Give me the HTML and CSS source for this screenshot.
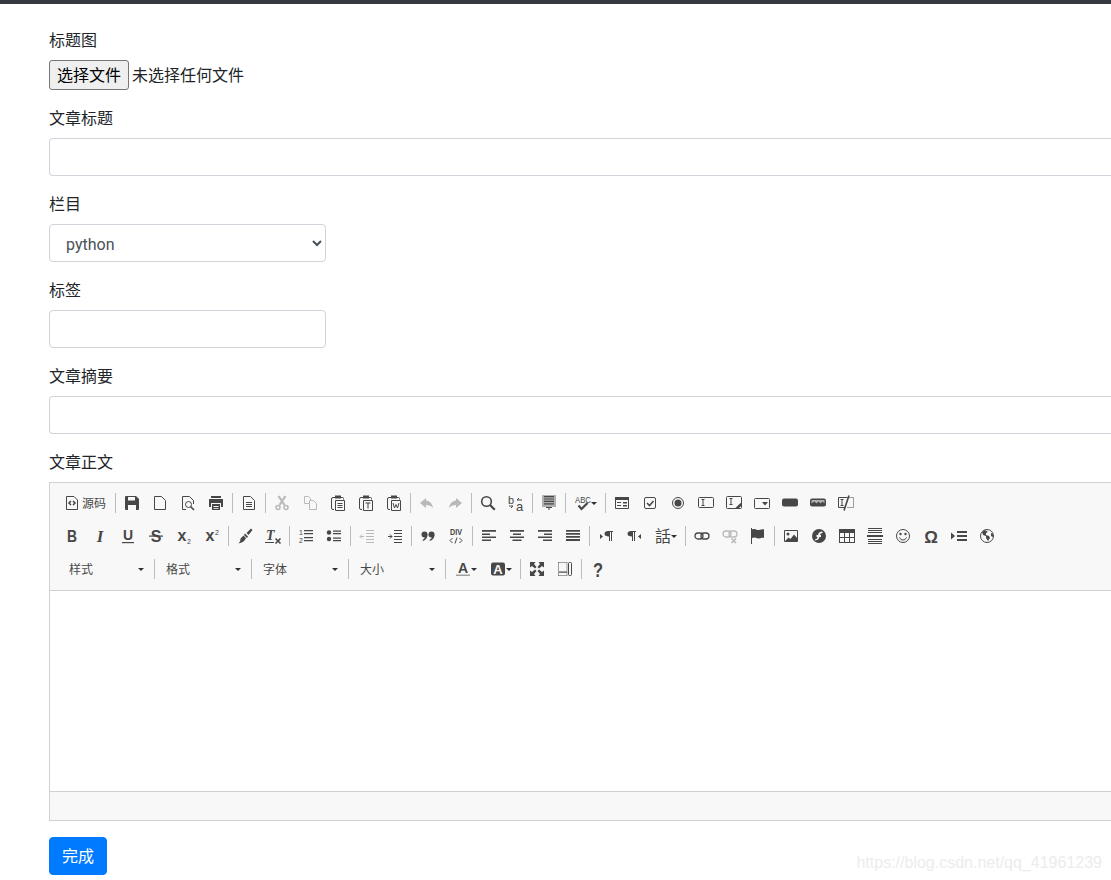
FILE: index.html
```html
<!DOCTYPE html>
<html lang="zh">
<head>
<meta charset="utf-8">
<title>文章编辑</title>
<link rel="stylesheet" href="styles.css">
</head>
<body>
<div class="topbar"></div>
<form class="form">
  <div class="group">
    <label class="label">标题图</label>
    <div class="file"><button type="button" class="file-btn">选择文件</button><span class="file-name">未选择任何文件</span></div>
  </div>
  <div class="group">
    <label class="label">文章标题</label>
    <input class="control" type="text">
  </div>
  <div class="group">
    <label class="label">栏目</label>
    <select class="control narrow pick"><option>python</option></select>
  </div>
  <div class="group">
    <label class="label">标签</label>
    <input class="control narrow" type="text">
  </div>
  <div class="group">
    <label class="label">文章摘要</label>
    <input class="control" type="text">
  </div>
  <div class="group">
    <label class="label">文章正文</label>
    <div class="editor">
      <div class="toolbar">
        <div class="row">
          <span class="btn src"><svg class="ic" viewBox="0 0 16 16"><path class="o" d="M2.500 1.500h7.500l3.500 3.500v9.500h-11z"/><path class="o2" d="M7 6 5 8l2 2M9 6l2 2-2 2"/></svg><span class="btn-text">源码</span></span>
          <i class="sep"></i>
          <span class="btn"><svg class="ic" viewBox="0 0 16 16"><path class="f" d="M2 1h10l3 3v10a1 1 0 0 1-1 1H2a1 1 0 0 1-1-1V2a1 1 0 0 1 1-1z"/><path class="w" d="M4 2h7v3.500H4zM4 10h8v5H4z"/></svg></span>
          <span class="btn"><svg class="ic" viewBox="0 0 16 16"><path class="o" d="M2.500 1.500h7l4 4v9h-11z"/></svg></span>
          <span class="btn"><svg class="ic" viewBox="0 0 16 16"><path class="o" d="M6 14.500H2.500v-13h7l4 4V9"/><circle class="o" cx="8.500" cy="9.500" r="3"/><path class="o2" d="m10.500 11.500 3.500 3.500"/></svg></span>
          <span class="btn"><svg class="ic" viewBox="0 0 16 16"><path class="f" d="M3 1h10v2H3zM1 4h14v8h-2V8H3v4H1z"/><path class="f" d="M4 9h8v6H4z"/><path class="w" d="M5.500 11h5v1h-5zM5.500 13h5v.8h-5z"/></svg></span>
          <i class="sep"></i>
          <span class="btn"><svg class="ic" viewBox="0 0 16 16"><path class="o" d="M2.500 1.500h7l4 4v9h-11zM5 7.500h6M5 9.500h6M5 11.500h6"/></svg></span>
          <i class="sep"></i>
          <span class="btn off"><svg class="ic" viewBox="0 0 16 16"><path class="o3" d="m4.500 1 6 9M11.500 1l-6 9"/><circle class="o2" cx="4" cy="12.500" r="2"/><circle class="o2" cx="12" cy="12.500" r="2"/></svg></span>
          <span class="btn off"><svg class="ic" viewBox="0 0 16 16"><path class="o" d="M7 8.500H2.500v-7h4l2 2v2M7.500 5.500h4l3 3v6h-7z"/></svg></span>
          <span class="btn"><svg class="ic" viewBox="0 0 16 16"><path class="o" d="M5 2.500H3a1.500 1.500 0 0 0-1.500 1.500v9A1.500 1.500 0 0 0 3 14.500h1M11 2.500h1.500a1 1 0 0 1 1 1v1"/><path class="f" d="M5 .5h6v3H5z"/><path class="o" d="M5.500 5.500h9v10h-9zM7.500 8.500h5M7.500 10.500h5M7.500 12.500h5"/></svg></span>
          <span class="btn"><svg class="ic" viewBox="0 0 16 16"><path class="o" d="M5 2.500H3a1.500 1.500 0 0 0-1.500 1.500v9A1.500 1.500 0 0 0 3 14.500h1M11 2.500h1.500a1 1 0 0 1 1 1v1"/><path class="f" d="M5 .5h6v3H5z"/><path class="o" d="M5.500 5.500h9v10h-9zM7.500 8h5M10 8v5.500"/></svg></span>
          <span class="btn"><svg class="ic" viewBox="0 0 16 16"><path class="o" d="M5 2.500H3a1.500 1.500 0 0 0-1.500 1.500v9A1.500 1.500 0 0 0 3 14.500h1M11 2.500h1.500a1 1 0 0 1 1 1v1"/><path class="f" d="M5 .5h6v3H5z"/><path class="o" d="M5.500 5.500h9v10h-9zM7 8l1.500 5 1.500-3.500 1.500 3.500L13 8"/></svg></span>
          <i class="sep"></i>
          <span class="btn off"><svg class="ic" viewBox="0 0 16 16"><path class="f" d="M7 3 1 8l6 5v-3c3 0 5 .8 7 3-.500-4-3-7-7-7.500z"/></svg></span>
          <span class="btn off"><svg class="ic" viewBox="0 0 16 16"><path class="f" d="m9 3 6 5-6 5v-3c-3 0-5 .8-7 3 .500-4 3-7 7-7.500z"/></svg></span>
          <i class="sep"></i>
          <span class="btn"><svg class="ic" viewBox="0 0 16 16"><circle class="o2" cx="6.500" cy="6.500" r="4.800"/><path class="o3" d="m10 10 4.800 4.800"/></svg></span>
          <span class="btn"><svg class="ic" viewBox="0 0 16 16"><text class="glyph" x="0" y="8.500" font-size="11">b</text><text class="glyph" x="8" y="16" font-size="13">a</text><path class="o" d="M14 5H9l2-2M1 11h4l-2 2"/></svg></span>
          <i class="sep"></i>
          <span class="btn"><svg class="ic" viewBox="0 0 16 16"><path class="g" d="M1 0h14v12H1z"/><path class="f" d="M3 1h10v1.200H3zM3 3.400h10v1.200H3zM3 5.800h10V7H3zM3 8.200h10v1.200H3zM5 12h6v1H8.500v2h-1v-2H5z"/></svg></span>
          <i class="sep"></i>
          <span class="btn wide"><svg class="ic" viewBox="0 0 16 16"><text class="glyph" x="0" y="7.500" font-size="9" textLength="16" lengthAdjust="spacingAndGlyphs">ABC</text><path class="o3" d="m3.500 10.500 3 3.500 6-6"/></svg><i class="arrow"></i></span>
          <i class="sep"></i>
          <span class="btn"><svg class="ic" viewBox="0 0 16 16"><path class="o" d="M1.500 2.500h13v11h-13z"/><path class="f" d="M1 2h14v3H1zM3 7h4v1H3zM3 10h4v1H3zM9 7h4v1.500H9zM9 10h4v1.500H9z"/></svg></span>
          <span class="btn"><svg class="ic" viewBox="0 0 16 16"><rect class="o" x="2.500" y="2.500" width="11" height="11" rx="1.500"/><path class="o2" d="m5 8 2.500 2.500L11.500 6"/></svg></span>
          <span class="btn"><svg class="ic" viewBox="0 0 16 16"><circle class="o" cx="8" cy="8" r="5.500"/><circle class="f" cx="8" cy="8" r="3.500"/></svg></span>
          <span class="btn"><svg class="ic" viewBox="0 0 16 16"><rect class="o" x=".5" y="2.500" width="15" height="10" rx="1"/><path class="o" d="M3.500 4.500h3M3.500 10.500h3M5 4.500v6"/></svg></span>
          <span class="btn"><svg class="ic" viewBox="0 0 16 16"><rect class="o" x=".5" y="1.500" width="15" height="12" rx="1"/><path class="o" d="M3.500 3.500h3M3.500 9.500h3M5 3.500v6"/><path class="f" d="m15 8-1 .5-5.500 5.500H12l3-3z"/></svg></span>
          <span class="btn"><svg class="ic" viewBox="0 0 16 16"><rect class="o" x=".5" y="3.500" width="15" height="10" rx="1"/><path class="f" d="M8 7h6l-3 3.500z"/></svg></span>
          <span class="btn"><svg class="ic" viewBox="0 0 16 16"><rect class="f" x="0" y="3.500" width="16" height="8" rx="2"/></svg></span>
          <span class="btn"><svg class="ic" viewBox="0 0 16 16"><rect class="f" x="0" y="3.500" width="16" height="8" rx="2"/><path class="g" d="M1.500 5h13v3.500l-2-2-2 2-2-2-2 2-2-2-3 2z"/></svg></span>
          <span class="btn"><svg class="ic" viewBox="0 0 16 16"><path class="o" d="M7 12.500H.5v-10h9M2.500 4.500h3M2.500 10.500h3M4 4.500v6"/><path class="o2" d="M6 15.500 11 .5"/><path class="dot" d="M11.500 2.500h4v10H9"/></svg></span>
        </div>
        <div class="row">
          <span class="btn"><svg class="ic" viewBox="0 0 16 16"><text class="glyph bold" x="8" y="14" font-size="16.500" text-anchor="middle" textLength="10" lengthAdjust="spacingAndGlyphs">B</text></svg></span>
          <span class="btn"><svg class="ic" viewBox="0 0 16 16"><text class="glyph bold slant" x="8" y="14" font-size="17" text-anchor="middle">I</text></svg></span>
          <span class="btn"><svg class="ic" viewBox="0 0 16 16"><text class="glyph bold" x="8" y="12" font-size="14" text-anchor="middle">U</text><path class="f" d="M2 14h12v1.200H2z"/></svg></span>
          <span class="btn"><svg class="ic" viewBox="0 0 16 16"><text class="glyph bold" x="8" y="14" font-size="16" text-anchor="middle">S</text><path class="f" d="M1 7.500h14v1.200H1z"/></svg></span>
          <span class="btn"><svg class="ic" viewBox="0 0 16 16"><text class="glyph bold" x="1.500" y="13" font-size="16">x</text><text class="glyph" x="11" y="15.500" font-size="7">2</text></svg></span>
          <span class="btn"><svg class="ic" viewBox="0 0 16 16"><text class="glyph bold" x="1.500" y="13" font-size="16">x</text><text class="glyph" x="11" y="7" font-size="7">2</text></svg></span>
          <i class="sep"></i>
          <span class="btn"><svg class="ic" viewBox="0 0 16 16"><path class="f" d="m14 .5 1.500 1.500-4 5-2-2zM8 5.500l3 3-1 1.500-3-3zM6.500 7.500 9 10c-1 3-4 5-7.500 5.500 1.500-1.500 2-3 2-5z"/></svg></span>
          <span class="btn"><svg class="ic" viewBox="0 0 16 16"><text class="glyph bold slant" x="1" y="12" font-size="14">T</text><path class="f" d="M0 14h9v1H0z"/><path class="o2" d="m10.500 10.500 5 5M15.500 10.500l-5 5"/></svg></span>
          <i class="sep"></i>
          <span class="btn"><svg class="ic" viewBox="0 0 16 16"><text class="glyph" x="1" y="7" font-size="7">1</text><text class="glyph" x="1" y="15" font-size="7">2</text><path class="f" d="M6 2h9v1.200H6zM6 5h9v1.200H6zM6 9h9v1.200H6zM6 12h9v1.200H6z"/></svg></span>
          <span class="btn"><svg class="ic" viewBox="0 0 16 16"><circle class="f" cx="3" cy="4.500" r="2.200"/><circle class="f" cx="3" cy="11" r="2.200"/><path class="f" d="M7 2.500h8v1.200H7zM7 5h8v1.200H7zM7 9.500h8v1.200H7zM7 12h8v1.200H7z"/></svg></span>
          <i class="sep"></i>
          <span class="btn off"><svg class="ic" viewBox="0 0 16 16"><path class="o" d="M7 2.500h8M7 5.500h8M7 8.500h8M7 11.500h8M7 14.500h8"/><path class="o" d="M1 8.500h4M3 6.500l-2 2 2 2"/></svg></span>
          <span class="btn"><svg class="ic" viewBox="0 0 16 16"><path class="o" d="M7 2.500h8M7 5.500h8M7 8.500h8M7 11.500h8M7 14.500h8"/><path class="o" d="M1 8.500h4M3 6.500l2 2-2 2"/></svg></span>
          <i class="sep"></i>
          <span class="btn"><svg class="ic" viewBox="0 0 16 16"><circle class="f" cx="4.500" cy="6.500" r="3"/><circle class="f" cx="11.500" cy="6.500" r="3"/><path class="f" d="M7.500 6.500c0 3-1.500 5.500-4.500 6.500l-.5-1c1.500-.8 2.500-2 2.500-3.500zM14.500 6.500c0 3-1.500 5.500-4.500 6.500l-.5-1c1.500-.8 2.500-2 2.500-3.500z"/></svg></span>
          <span class="btn"><svg class="ic" viewBox="0 0 16 16"><text class="glyph bold" x="8" y="7" font-size="8.500" text-anchor="middle" textLength="12" lengthAdjust="spacingAndGlyphs">DIV</text><path class="o" d="M4.500 10 2 12.500 4.500 15M11.500 10l2.500 2.500-2.500 2.500M9 9.500l-2 6"/></svg></span>
          <i class="sep"></i>
          <span class="btn"><svg class="ic" viewBox="0 0 16 16"><path class="f" d="M1 2h14v1.800H1zM1 5.500h8v1.500H1zM1 8.500h14v1.500H1zM1 11.500h9V13H1z"/></svg></span>
          <span class="btn"><svg class="ic" viewBox="0 0 16 16"><path class="f" d="M1 2h14v1.800H1zM4 5.500h8v1.500H4zM1 8.500h14v1.500H1zM3.500 11.500h9V13h-9z"/></svg></span>
          <span class="btn"><svg class="ic" viewBox="0 0 16 16"><path class="f" d="M1 2h14v1.800H1zM7 5.500h8v1.500H7zM1 8.500h14v1.500H1zM6 11.500h9V13H6z"/></svg></span>
          <span class="btn"><svg class="ic" viewBox="0 0 16 16"><path class="f" d="M1 2h14v1.800H1zM1 5h14v1.700H1zM1 8h14v1.700H1zM1 11h14v2H1z"/></svg></span>
          <i class="sep"></i>
          <span class="btn"><svg class="ic" viewBox="0 0 16 16"><path class="f" d="m2 6 3 2.500L2 11zM10 3h5v1h-1v9h-1V4h-1v9h-1V8.500C8 8.500 6.500 7.500 6.500 5.700S8 3 10 3z"/></svg></span>
          <span class="btn"><svg class="ic" viewBox="0 0 16 16"><path class="f" d="m15 6-3 2.500 3 2.500zM5 3h5v1H9v9H8V4H7v9H6V8.500C3 8.500 1.500 7.500 1.500 5.700S3 3 5 3z"/></svg></span>
          <span class="btn wide"><svg class="ic" viewBox="0 0 16 16"><text class="lang" x="8" y="14" font-size="16" text-anchor="middle">話</text></svg><i class="arrow"></i></span>
          <i class="sep"></i>
          <span class="btn"><svg class="ic" viewBox="0 0 16 16"><rect class="o4" x="1" y="5" width="8" height="6" rx="3"/><rect class="o4" x="7" y="5" width="8" height="6" rx="3"/></svg></span>
          <span class="btn off"><svg class="ic" viewBox="0 0 16 16"><rect class="o4" x="1" y="3" width="8" height="6" rx="3"/><rect class="o4" x="7" y="3" width="8" height="6" rx="3"/><path class="o2" d="m9.500 10.500 4.500 4.500M14 10.500 9.500 15"/></svg></span>
          <span class="btn"><svg class="ic" viewBox="0 0 16 16"><path class="o" d="M1.500 0v16"/><path class="f" d="M2 1.500c3-1.500 5 1 7 .5s4-1 5-.5V10c-2-.5-3 .5-5 .5S5 8.500 2 10z"/></svg></span>
          <i class="sep"></i>
          <span class="btn"><svg class="ic" viewBox="0 0 16 16"><path class="o" d="M1.500 2.500h13v11h-13z"/><circle class="f" cx="5" cy="6" r="1.500"/><path class="f" d="m2 13 3.500-3.500 2 1.500 3.500-4.500 3.500 4V13z"/></svg></span>
          <span class="btn"><svg class="ic" viewBox="0 0 16 16"><circle class="f" cx="8" cy="8" r="7"/><path class="w" d="M11.500 3.500c-3 0-4 1.500-4.500 3.500H5.500v2H6.500c-.3 1.500-1 2-2.500 2.500v1c3-.3 4-1.500 4.500-3.500H10V7H9c.3-1.200 1-1.800 2.500-2z"/></svg></span>
          <span class="btn"><svg class="ic" viewBox="0 0 16 16"><path class="f" d="M0 1h16v14H0z"/><path class="w" d="M1 5h4v4H1zM6 5h4v4H6zM11 5h4v4h-4zM1 10h4v4H1zM6 10h4v4H6zM11 10h4v4h-4z"/></svg></span>
          <span class="btn"><svg class="ic" viewBox="0 0 16 16"><path class="o" d="M1 .5h14M1 2.500h14M1 4.500h14M1 11.500h14M1 13.500h14M1 15.500h14"/><path class="f" d="M0 7h16v2H0z"/></svg></span>
          <span class="btn"><svg class="ic" viewBox="0 0 16 16"><circle class="o" cx="8" cy="8" r="6.500"/><circle class="f" cx="5.500" cy="6" r="1.200"/><circle class="f" cx="10.500" cy="6" r="1.200"/><path class="o" d="M4.500 9.500c1 2 2 2.500 3.500 2.500s2.500-.5 3.500-2.500"/></svg></span>
          <span class="btn"><svg class="ic" viewBox="0 0 16 16"><text class="glyph bold" x="8" y="14.500" font-size="17" text-anchor="middle">Ω</text></svg></span>
          <span class="btn"><svg class="ic" viewBox="0 0 16 16"><path class="f" d="m0 4.500 4 3.500-4 3.500zM6 3h10v2H6zM6 7h10v2H6zM6 11h10v2H6z"/></svg></span>
          <span class="btn"><svg class="ic" viewBox="0 0 16 16"><circle class="o" cx="8" cy="8" r="6.500"/><path class="f" d="M6 2 3 4l1 3 3 1v2l2 3 2-3-1-2-3-1V5l2-1zM12 5l2 1v3l-2-1z"/></svg></span>
        </div>
        <div class="row row-last">
          <span class="combo"><span class="combo-text">样式</span><i class="arrow"></i></span><i class="sep"></i>
          <span class="combo"><span class="combo-text">格式</span><i class="arrow"></i></span><i class="sep"></i>
          <span class="combo"><span class="combo-text">字体</span><i class="arrow"></i></span><i class="sep"></i>
          <span class="combo"><span class="combo-text">大小</span><i class="arrow"></i></span><i class="sep"></i>
          <span class="btn wide"><svg class="ic" viewBox="0 0 16 16"><text class="glyph bold" x="8" y="12" font-size="14" text-anchor="middle">A</text><path class="g2" d="M1 13.500h14V15H1z"/></svg><i class="arrow"></i></span>
          <span class="btn wide"><svg class="ic" viewBox="0 0 16 16"><rect class="f" x="1" y="1.500" width="14" height="13" rx="2"/><text class="glyph bold inv" x="8" y="13" font-size="13" text-anchor="middle">A</text></svg><i class="arrow"></i></span>
          <i class="sep"></i>
          <span class="btn"><svg class="ic" viewBox="0 0 16 16"><path class="f" d="M1 1h5.500L5 3l2.500 3L6 7.500 3 5 1 6.500zM15 1v5.500L13 5l-3 2.500L8.500 6 11 3 9.500 1zM1 15V9.500L3 11l3-2.500L7.500 10 5 13l1.500 2zM15 15H9.500L11 13 8.500 10 10 8.500l3 2.500 2-1.500z"/></svg></span>
          <span class="btn"><svg class="ic" viewBox="0 0 16 16"><path class="dot" d="M1.500 1.500h8.500M1.500 14.500h8.500M1.500 1.500v13M10 1.500v13"/><path class="f" d="M2 10.500h8v1.200H2z"/><rect class="o" x="11.500" y="1.500" width="3" height="13" rx="1"/></svg></span>
          <i class="sep"></i>
          <span class="btn"><svg class="ic" viewBox="0 0 16 16"><text class="glyph bold" x="8" y="15.500" font-size="20" text-anchor="middle" textLength="10" lengthAdjust="spacingAndGlyphs">?</text></svg></span>
        </div>
      </div>
      <div class="content"></div>
      <div class="status"></div>
    </div>
  </div>
  <button type="button" class="submit">完成</button>
</form>
<div class="watermark">https://blog.csdn.net/qq_41961239</div>
</body>
</html>
```
FILE: styles.css
```css
* { box-sizing: border-box; }
html, body { height: 100%; overflow: hidden; }
body {
  margin: 0;
  background: #fff;
  color: #212529;
  font: 16px/24px "Open Sans", "Noto Sans CJK SC", sans-serif;
}
.topbar { height: 4px; background: #343a40; }
.form { width: 100%; padding: 24px 0 0 49px; }
.group { margin-bottom: 16px; }
.label { display: block; margin-bottom: 8px; padding-bottom: 2px; font: 16px/22px "Noto Sans CJK SC", sans-serif; }
.file { display: flex; align-items: center; height: 30px; }
.file-btn {
  width: 80px;
  height: 30px;
  padding: 0 0 2px;
  border: 1px solid #767676;
  border-radius: 3px;
  background: #efefef;
  color: #000;
  font: 16px/24px "Noto Sans CJK SC", sans-serif;
}
.file-name { margin-left: 3px; padding-bottom: 2px; font: 16px/22px "Noto Sans CJK SC", sans-serif; }
.control {
  display: block;
  width: 100%;
  height: 38px;
  padding: 6px 12px;
  border: 1px solid #ced4da;
  border-right: 0;
  border-radius: 4px 0 0 4px;
  background: #fff;
  color: #495057;
  font: 16px/24px Roboto, sans-serif;
}
.narrow { width: 277px; border-right: 1px solid #ced4da; border-radius: 4px; }
.pick { padding: 7px 12px 5px; }
.editor { width: 100%; border: 1px solid #d1d1d1; border-right: 0; }
.toolbar {
  display: flex;
  flex-direction: column;
  gap: 5px;
  height: 108px;
  padding: 6px 8px 0;
  background: #f8f8f8;
  border-bottom: 1px solid #d1d1d1;
}
.row { display: flex; align-items: center; height: 28px; }
.row-last { padding-left: 2px; }
.btn { display: flex; align-items: center; justify-content: center; flex: none; width: 28px; height: 28px; }
.btn.src { width: 55px; justify-content: flex-start; padding-left: 6px; }
.btn.wide { width: 35px; justify-content: flex-start; padding-left: 7px; }
.btn.off { opacity: .35; }
.btn-text { margin-left: 2px; color: #484848; font: 12px/16px "Noto Sans CJK SC", sans-serif; }
.sep { flex: none; width: 1px; height: 20px; margin: 0 2px; background: #bcbcbc; }
.ic { display: block; flex: none; width: 16px; height: 16px; overflow: visible; }
.f { fill: #474747; }
.w { fill: #f8f8f8; }
.g { fill: #b0b0b0; }
.g2 { fill: #a0a0a0; }
.o, .o2, .o3, .o4, .dot { fill: none; stroke: #474747; stroke-width: 1; }
.o2 { stroke-width: 1.600; }
.o3 { stroke-width: 2.200; }
.o4 { stroke-width: 1.300; }
.dot { stroke-dasharray: 1 1; }
.glyph { fill: #474747; font-family: "Liberation Sans", sans-serif; }
.bold { font-weight: 700; }
.slant { font-style: italic; font-family: "Liberation Serif", serif; }
.inv { fill: #f8f8f8; }
.lang { fill: #474747; font-family: "Noto Sans CJK TC", sans-serif; }
.arrow {
  flex: none;
  width: 0;
  height: 0;
  border: 3px solid transparent;
  border-top-color: #2f2f2f;
  border-bottom: 0;
}
.combo { display: flex; align-items: center; justify-content: space-between; flex: none; width: 92px; height: 28px; padding: 0 8px 0 9px; }
.combo-text { color: #484848; font: 12px/16px "Noto Sans CJK SC", sans-serif; }
.content { height: 200px; background: #fff; }
.status { height: 29px; background: #f8f8f8; border-top: 1px solid #d1d1d1; }
.submit {
  display: block;
  width: 58px;
  height: 38px;
  padding: 0 0 2px;
  border: 1px solid #007bff;
  border-radius: 4px;
  background: #007bff;
  color: #fff;
  font: 16px/24px "Noto Sans CJK SC", sans-serif;
}
.watermark {
  position: absolute;
  right: 9px;
  top: 852px;
  color: #ececec;
  font: 16px/22px "Liberation Sans", sans-serif;
}
```
